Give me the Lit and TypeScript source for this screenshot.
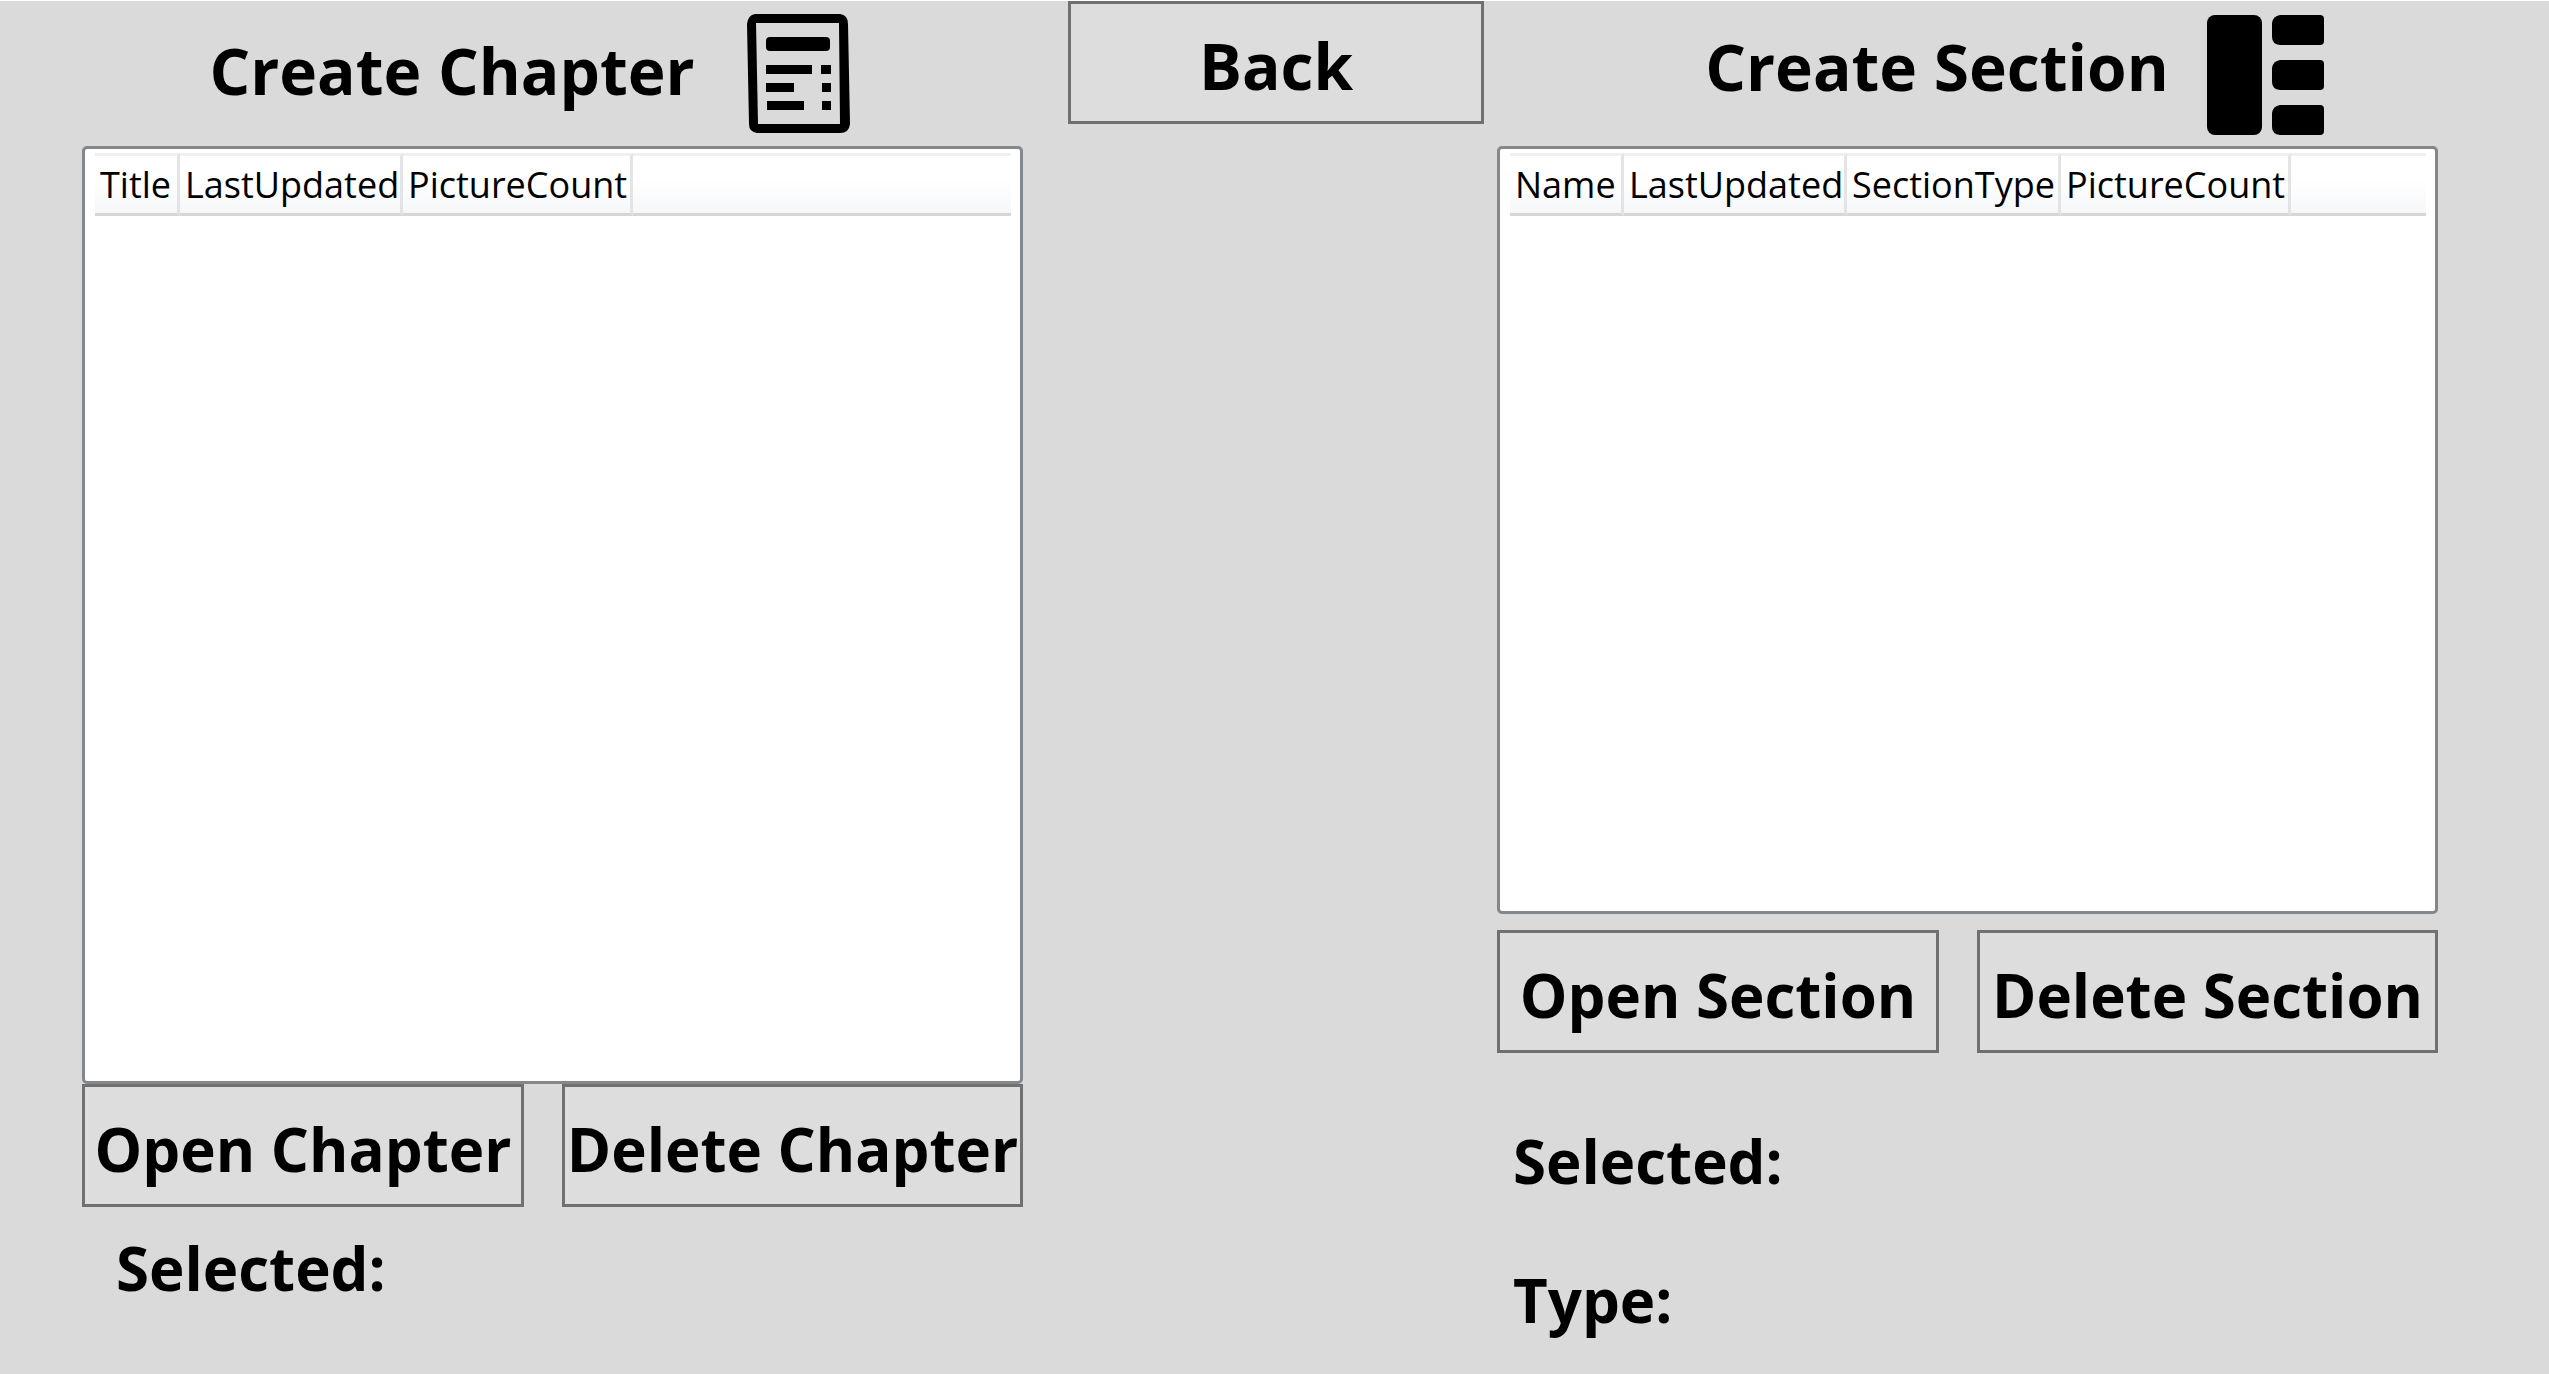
import { LitElement, html, css, svg } from "lit";
import { customElement, property } from "lit/decorators.js";

interface Column {
  title: string;
  width: number;
}

const chapterColumns: Column[] = [
  { title: "Title", width: 85 },
  { title: "LastUpdated", width: 223 },
  { title: "PictureCount", width: 230 },
];

const sectionColumns: Column[] = [
  { title: "Name", width: 114 },
  { title: "LastUpdated", width: 223 },
  { title: "SectionType", width: 214 },
  { title: "PictureCount", width: 230 },
];

const chapterIcon = svg`
  <path fill-rule="evenodd" d="M8 0H93Q101 1 101 10L103 110Q102 119 93 119H10Q2 118 2 110L0 10Q1 1 8 0ZM9 9L11 110H93L92 9Z"/>
  <rect x="19" y="23" width="64" height="14" rx="4"/>
  <path d="M19 51H65V60H19ZM74 51H84V60H74ZM19 69H47V78H19ZM75 69H84V78H75ZM20 87H57V96H20ZM75 87H84V96H75Z"/>
`;

const sectionIcon = svg`
  <rect width="55" height="120" rx="8"/>
  <path d="M73 0H113Q117 0 117 4V26Q117 30 113 30H73Q65 29 65 22V8Q66 1 73 0Z"/>
  <path d="M73 45H113Q117 45 117 49V71Q117 75 113 75H73Q65 74 65 67V53Q66 46 73 45Z"/>
  <path d="M73 90H113Q117 90 117 94V116Q117 120 113 120H73Q65 119 65 112V98Q66 91 73 90Z"/>
`;

@customElement("record-list")
export class RecordList extends LitElement {
  @property({ attribute: false }) columns: Column[] = [];

  static styles = css`
    :host {
      display: block;
      box-sizing: border-box;
      border: 3px solid #83888d;
      border-radius: 5px;
      padding: 4px 9px 4px 10px;
      background: #fff;
      overflow: hidden;
    }
    .grid {
      width: 100%;
      table-layout: fixed;
      border-collapse: separate;
      border-spacing: 0;
    }
    .head {
      box-sizing: border-box;
      height: 63px;
      padding: 0 0 0 5px;
      border-top: 3px solid #f0f0f0;
      border-bottom: 3px solid #d6d6d7;
      border-right: 3px solid #e3e4e6;
      background: linear-gradient(#fff 40%, #f6f7f9);
      font-size: 36px;
      font-weight: 400;
      line-height: 48px;
      text-align: left;
      white-space: nowrap;
    }
    .filler {
      border-right: 0;
    }
  `;

  render() {
    return html`
      <table class="grid">
        <colgroup>
          ${this.columns.map((c) => html`<col style="width:${c.width}px" />`)}
          <col />
        </colgroup>
        <thead>
          <tr>
            ${this.columns.map((c) => html`<th class="head" scope="col">${c.title}</th>`)}
            <td class="head filler"></td>
          </tr>
        </thead>
        <tbody></tbody>
      </table>
    `;
  }
}

@customElement("app-root")
export class AppRoot extends LitElement {
  static styles = css`
    :host {
      display: block;
      font-family: "Open Sans", "Noto Sans", sans-serif;
      color: #000;
    }
    .page {
      box-sizing: border-box;
      min-height: 100vh;
      display: grid;
      grid-template-columns: 941fr 474fr 941fr;
      padding: 0 111px 0 82px;
      border-top: 1px solid #fff;
      background: #dadada;
    }
    .panel {
      display: flex;
      flex-direction: column;
      min-width: 0;
    }
    .middle {
      margin: 0 13px 0 45px;
    }
    .header {
      box-sizing: border-box;
      height: 145px;
      display: flex;
      align-items: flex-start;
      justify-content: center;
      padding-top: 13px;
    }
    .chapters .header {
      gap: 52px;
      padding-right: 46px;
    }
    .sections .header {
      gap: 38px;
      padding-top: 14px;
      padding-left: 94px;
    }
    .title {
      margin: 0;
      font-size: 64px;
      font-weight: 700;
      line-height: 114px;
      white-space: nowrap;
    }
    .sections .title {
      line-height: 104px;
    }
    .create {
      padding: 0;
      border: 0;
      background: none;
      cursor: pointer;
    }
    .icon {
      display: block;
    }
    .list {
      flex: 1;
    }
    .actions {
      display: grid;
      grid-template-columns: 442fr 461fr;
      gap: 38px;
    }
    .sections .actions {
      margin-top: 16px;
    }
    .button {
      box-sizing: border-box;
      width: 100%;
      height: 123px;
      padding: 6px 0 0;
      border: 3px solid #707070;
      border-radius: 0;
      background: #ddd;
      color: inherit;
      font-family: inherit;
      font-size: 60px;
      font-weight: 700;
      line-height: 80px;
      white-space: nowrap;
      display: flex;
      align-items: center;
      justify-content: center;
    }
    .back {
      font-size: 64px;
    }
    .details {
      box-sizing: border-box;
      font-size: 60px;
      font-weight: 700;
      line-height: 80px;
    }
    .chapters .details {
      height: 167px;
      padding: 21px 0 0 34px;
    }
    .sections .details {
      display: flex;
      flex-direction: column;
      gap: 59px;
      height: 321px;
      padding: 68px 0 0 16px;
    }
    .line {
      margin: 0;
    }
  `;

  render() {
    return html`
      <main class="page">
        <section class="panel chapters">
          <header class="header">
            <h2 class="title">Create Chapter</h2>
            <button class="create" type="button" aria-label="Create Chapter">
              <svg class="icon" width="103" height="119" viewBox="0 0 103 119">${chapterIcon}</svg>
            </button>
          </header>
          <record-list class="list" .columns=${chapterColumns}></record-list>
          <div class="actions">
            <button class="button" type="button">Open Chapter</button>
            <button class="button" type="button">Delete Chapter</button>
          </div>
          <div class="details"><p class="line">Selected:</p></div>
        </section>
        <nav class="middle">
          <button class="button back" type="button">Back</button>
        </nav>
        <section class="panel sections">
          <header class="header">
            <h2 class="title">Create Section</h2>
            <button class="create" type="button" aria-label="Create Section">
              <svg class="icon" width="117" height="120" viewBox="0 0 117 120">${sectionIcon}</svg>
            </button>
          </header>
          <record-list class="list" .columns=${sectionColumns}></record-list>
          <div class="actions">
            <button class="button" type="button">Open Section</button>
            <button class="button" type="button">Delete Section</button>
          </div>
          <div class="details">
            <p class="line">Selected:</p>
            <p class="line">Type:</p>
          </div>
        </section>
      </main>
    `;
  }
}
